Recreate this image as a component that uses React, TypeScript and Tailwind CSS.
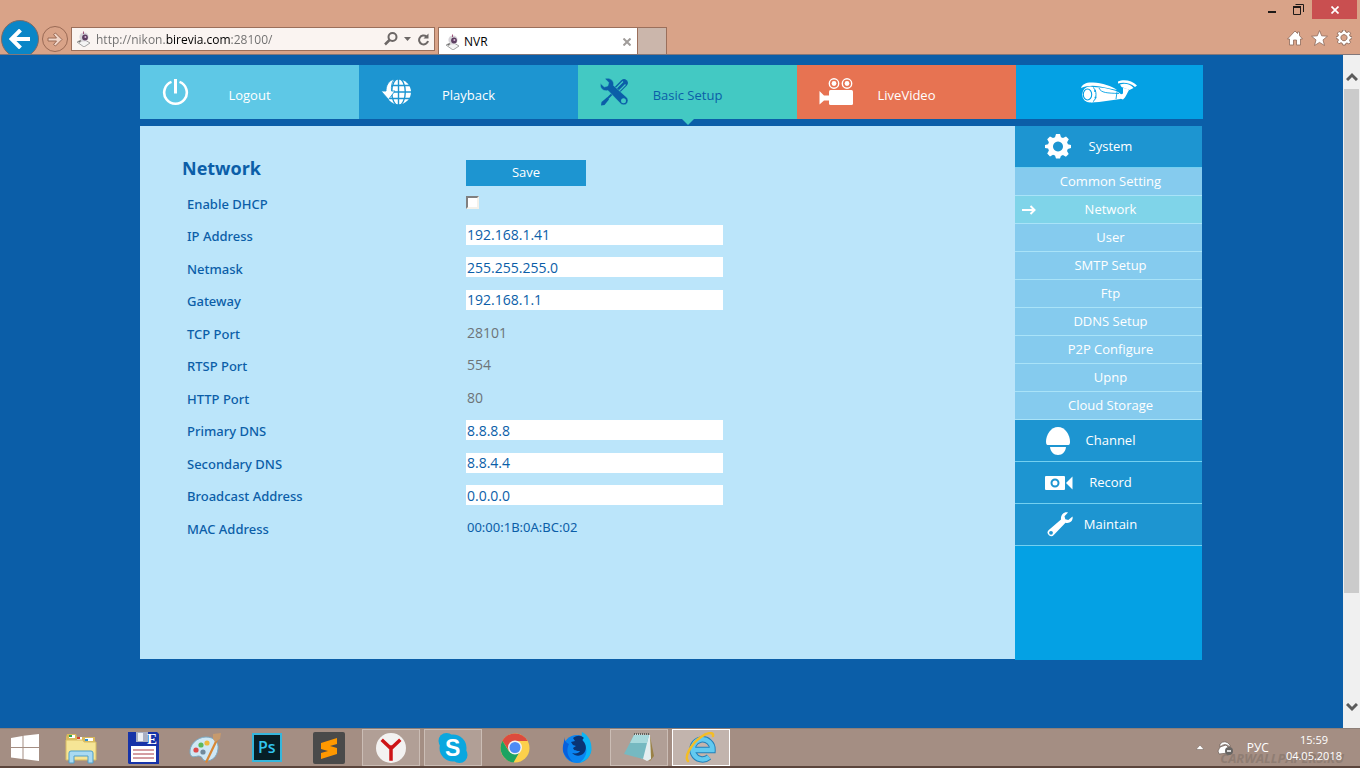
import type { ReactNode } from 'react'

interface NavTile {
	label: string
	color: string
	icon: ReactNode
	active?: boolean
}

interface Field {
	id: string
	label: string
	value: string
	kind: 'input' | 'readonly' | 'text'
}

interface TaskbarApp {
	name: string
	icon: ReactNode
	state?: 'open' | 'focused'
}

const fields: Field[] = [
	{ id: 'ip', label: 'IP Address', value: '192.168.1.41', kind: 'input' },
	{ id: 'netmask', label: 'Netmask', value: '255.255.255.0', kind: 'input' },
	{ id: 'gateway', label: 'Gateway', value: '192.168.1.1', kind: 'input' },
	{ id: 'tcp', label: 'TCP Port', value: '28101', kind: 'readonly' },
	{ id: 'rtsp', label: 'RTSP Port', value: '554', kind: 'readonly' },
	{ id: 'http', label: 'HTTP Port', value: '80', kind: 'readonly' },
	{ id: 'dns1', label: 'Primary DNS', value: '8.8.8.8', kind: 'input' },
	{ id: 'dns2', label: 'Secondary DNS', value: '8.8.4.4', kind: 'input' },
	{ id: 'broadcast', label: 'Broadcast Address', value: '0.0.0.0', kind: 'input' },
	{ id: 'mac', label: 'MAC Address', value: '00:00:1B:0A:BC:02', kind: 'text' },
]

const systemLinks = [
	'Common Setting',
	'Network',
	'User',
	'SMTP Setup',
	'Ftp',
	'DDNS Setup',
	'P2P Configure',
	'Upnp',
	'Cloud Storage',
]

function Favicon() {
	return (
		<svg width="15" height="16" viewBox="0 0 15 16" className="shrink-0">
			<path d="M1 11l8-2 5 3-6 4z" fill="#f4f4f4" stroke="#8d8d8d" strokeWidth="0.8" />
			<circle cx="8" cy="6" r="4.6" fill="#d6d3d8" />
			<circle cx="9" cy="6.5" r="2.9" fill="#5d3f62" />
			<circle cx="9.4" cy="6" r="1" fill="#d9b6d6" />
			<path d="M7.5 3V0.5" stroke="#a0557c" />
			<path d="M2 10l3-1-1 3z" fill="#6e6e6e" />
		</svg>
	)
}

function PowerIcon() {
	return (
		<svg width="27" height="28" viewBox="0 0 27 28" fill="none" stroke="#fff">
			<path d="M9.5 3.9a11.3 11.3 0 1 0 8 0" strokeWidth="2.6" />
			<path d="M13.5 1v14.5" strokeWidth="3" />
		</svg>
	)
}

function GlobeIcon() {
	return (
		<svg width="31" height="27" viewBox="0 0 31 27">
			<circle cx="17.5" cy="13" r="12.5" fill="#fff" />
			<g fill="none" stroke="#1d95d1" strokeWidth="1.4">
				<path d="M17.5 0v26M4 13h27M6 6.5h24M6 19.5h24" />
				<ellipse cx="17.5" cy="13" rx="6.8" ry="13.5" />
			</g>
			<path
				d="M13 0C7 2 5 7 5 12H0l7.5 8.5L14 12h-3.5C10 7 11 3 13 0z"
				fill="#fff"
				stroke="#1d95d1"
				strokeWidth="0.9"
			/>
		</svg>
	)
}

function ToolsIcon() {
	return (
		<svg width="28" height="28" viewBox="0 0 28 28">
			<path d="M17 12l7-7" stroke="#0b5ea8" strokeWidth="7.5" strokeLinecap="round" />
			<path d="M15.5 11l7.5-7.5M18 14l7.5-7.5" stroke="#43c9c3" strokeWidth="1.2" />
			<path d="M12 16l-6 6" stroke="#0b5ea8" strokeWidth="1.8" />
			<path d="M7 19.5l2 2-4.5 5.5-3.5 0.5 0.5-3.5z" fill="#0b5ea8" />
			<path
				d="M5 0.8l3.8 3.7-1 3.5-3.5 1L0.6 5.5C-0.5 9.5 3 13.8 8 12.5L20.5 25.5a4.3 4.3 0 0 0 6.3-6L13.5 7.5C14.5 3 10 -1 5 0.8z"
				fill="#0b5ea8"
				stroke="#43c9c3"
				strokeWidth="0.5"
			/>
			<circle cx="23.5" cy="22.8" r="2.5" fill="#43c9c3" />
		</svg>
	)
}

function MovieIcon() {
	return (
		<svg width="35" height="28" viewBox="0 0 35 28">
			<g fill="none" stroke="#fff" strokeWidth="1.4">
				<circle cx="15" cy="5.5" r="4.7" />
				<circle cx="28" cy="5.5" r="4.7" />
			</g>
			<g fill="#fff">
				<circle cx="15" cy="5.5" r="2.4" />
				<circle cx="28" cy="5.5" r="2.4" />
				<rect x="10" y="12" width="24" height="15" rx="1.5" />
				<path d="M0.5 13L5 17.5h5v5H5L0.5 26.5z" />
			</g>
		</svg>
	)
}

function BulletCameraLogo() {
	return (
		<svg width="57" height="24" viewBox="0 0 57 24" fill="#fff">
			<path d="M0 8C1 4 6 2 12 2.5c9 0.5 19 3.5 24 7.5L19 6.5C12 5 6 5.5 0 8z" />
			<path d="M12 7l7 0.5c6 0.5 12 2 18 4.5l4 3-1.5 4L18 22l-8 0.5z" />
			<ellipse cx="9" cy="14.5" rx="7.8" ry="8" />
			<ellipse cx="6.5" cy="14.5" rx="4.2" ry="5.5" fill="none" stroke="#04a1e4" strokeWidth="1.1" />
			<path d="M12 7.5c4 2 4 12 0 14" fill="none" stroke="#04a1e4" />
			<path d="M18 8c2 5 8 5 20 5.5M36 12l-1 7" fill="none" stroke="#04a1e4" strokeWidth="0.9" />
			<circle cx="14" cy="11" r="1" fill="#04a1e4" />
			<circle cx="14.5" cy="17.5" r="1" fill="#04a1e4" />
			<path d="M37 1.5c5-2.500 14-1.500 19 4l-2 1.500C49 2.500 42 2 37 3.500z" />
			<path d="M39 4.500c5-1.500 10-0.500 13.500 3.500l-4 2-8-3z" />
			<path d="M42 8c3 0 5 1 6 2-2 3-3 7-6 9.500l-3-1 1-4 2-1z" />
		</svg>
	)
}

function Cog({ size, fill, stroke }: { size: number; fill: string; stroke?: string }) {
	return (
		<svg width={size} height={size} viewBox="0 0 26 26">
			<path
				fillRule="evenodd"
				fill={fill}
				stroke={stroke}
				strokeWidth={stroke ? 1.5 : 0}
				strokeLinejoin="round"
				d="M11 0h4l1 3.300 2 0.800 3-1.700 2.800 2.800-1.700 3 0.800 2L26 11v3l-3.200 1-0.800 2 1.700 3-2.800 2.800-3-1.700-2 0.800L15 24.500h-4l-1-3-2-0.800-3 1.700-2.800-2.800 1.700-3-0.800-2L0 14v-3l3.100-0.800 0.800-2-1.700-3L5 2.400l3 1.700 2-0.800zM13 7.500a5 5 0 1 0 0.010 0z"
			/>
		</svg>
	)
}

function DomeIcon() {
	return (
		<svg width="26" height="28" viewBox="0 0 26 28" fill="#fff">
			<path d="M13 0c7 0 12 8 12 14.500 0 2-0.500 3.500-1.500 3.500h-21C1.500 18 1 16.500 1 14.500 1 8 6 0 13 0z" />
			<path d="M5 20h16c-0.500 4.500-3.500 8-8 8s-7.500-3.500-8-8z" />
		</svg>
	)
}

function RecordIcon() {
	return (
		<svg width="28" height="14" viewBox="0 0 28 14">
			<rect width="20" height="14" rx="1" fill="#fff" />
			<path d="M21 7l6.500-6.500v13z" fill="#fff" />
			<circle cx="10" cy="7" r="3.5" fill="none" stroke="#1d95d1" strokeWidth="2" />
		</svg>
	)
}

function WrenchIcon() {
	return (
		<svg width="28" height="25" viewBox="-2 0 28 25">
			<path
				d="M21 0.500l-3.500 3.800 0.800 3 3 0.800L25.500 4.500c1 4-2.500 7.500-7 6.300L7 22.800a3.500 3.500 0 0 1-5.500-4.600L14 7.500C13.500 3 17 -0.500 21 0.500z"
				fill="#fff"
			/>
			<circle cx="4" cy="20.8" r="1.9" fill="#1d95d1" />
		</svg>
	)
}

const navTiles: NavTile[] = [
	{ label: 'Logout', color: 'bg-[#5ec8e6] text-white', icon: <PowerIcon /> },
	{ label: 'Playback', color: 'bg-[#1d95d1] text-white', icon: <GlobeIcon /> },
	{ label: 'Basic Setup', color: 'bg-[#43c9c3] text-[#0b5ea8]', icon: <ToolsIcon />, active: true },
	{ label: 'LiveVideo', color: 'bg-[#e77352] text-white', icon: <MovieIcon /> },
]

const taskbarApps: TaskbarApp[] = [
	{
		name: 'File Explorer',
		icon: (
			<svg width="32" height="32" viewBox="0 0 32 32">
				<path d="M1 5l1-3h9l1 3h18v22H1z" fill="#d9b95c" />
				<path d="M4 3h6v3H4zM12 5h5v3h-5zM20 6h8v3h-8z" fill="#fff" />
				<path d="M4 3h3v2H4z" fill="#2fa84f" />
				<path d="M12 5h3v2h-3z" fill="#d8452f" />
				<path d="M20 7h3v2h-3z" fill="#2d8fd0" />
				<path d="M1 8h17l1 2h12v18H1z" fill="#f6e596" stroke="#d8bc63" />
				<path d="M4 31V21q0-2 2-2h20q2 0 2 2v10h-5v-7H9v7z" fill="#a9daf2" stroke="#4e9fc9" />
			</svg>
		),
	},
	{
		name: 'Disk',
		icon: (
			<svg width="32" height="32" viewBox="0 0 32 32">
				<path d="M1 0h29l2 2v30H2l-1-1z" fill="#1733a8" />
				<path d="M9 0h12v10H9z" fill="#aab0c4" />
				<path d="M11 1h5v8h-5z" fill="#eef0f6" />
				<path d="M4 14h25v16H4z" fill="#fff" />
				<path d="M6 18h21M6 22h21M6 26h21" stroke="#a83b44" />
				<text x="20" y="12" fontFamily="Liberation Serif, serif" fontWeight="700" fontSize="15" fill="#fff">
					E
				</text>
			</svg>
		),
	},
	{
		name: 'Paint',
		icon: (
			<svg width="32" height="32" viewBox="0 0 32 32">
				<path
					d="M1 21C0 13 8 5 17 5c8 0 13 5 12 12-1 8-6 12-12 12-4 0-3-5-7-5-3 0-8 3-9-3z"
					fill="#cfe7f4"
					stroke="#7ba9c4"
				/>
				<circle cx="7" cy="18" r="2.6" fill="#dd4a4a" />
				<circle cx="12" cy="13" r="2.6" fill="#5cb85a" />
				<circle cx="18" cy="11" r="2.6" fill="#edb93d" />
				<circle cx="14" cy="20" r="2.6" fill="#71899b" />
				<path d="M27 7l2 1-11 23-2-1z" fill="#d88735" />
				<path d="M24 2l8-1-1 6-5 3-2-3z" fill="#c79a6d" />
			</svg>
		),
	},
	{
		name: 'Photoshop',
		icon: (
			<svg width="30" height="30" viewBox="0 0 30 30">
				<rect x="1" y="1" width="28" height="27" fill="#071e26" stroke="#35b6dc" strokeWidth="2" />
				<text x="6" y="20" fontFamily="Open Sans, sans-serif" fontWeight="600" fontSize="16" fill="#31c5f0">
					Ps
				</text>
			</svg>
		),
	},
	{
		name: 'Sublime Text',
		icon: (
			<svg width="32" height="32" viewBox="0 0 32 32">
				<rect width="32" height="32" rx="2" fill="#4a4a4a" />
				<path d="M24 6v6l-7 2 7 2v6L8 27v-6l7-2-7-2v-6z" fill="#ff9800" />
			</svg>
		),
	},
	{
		name: 'Yandex Browser',
		state: 'open',
		icon: (
			<svg width="32" height="32" viewBox="0 0 32 32">
				<circle cx="16" cy="16" r="15" fill="#f3f2f1" />
				<path d="M8 9l8 7.500L24 9M16 15v12" fill="none" stroke="#cd1417" strokeWidth="3.5" strokeLinecap="square" />
			</svg>
		),
	},
	{
		name: 'Skype',
		state: 'open',
		icon: (
			<svg width="32" height="32" viewBox="0 0 32 32">
				<circle cx="16" cy="16" r="13.5" fill="#09a7df" />
				<circle cx="9.5" cy="9" r="8" fill="#09a7df" />
				<circle cx="22.5" cy="23" r="8" fill="#09a7df" />
				<text x="8" y="24" fontFamily="Liberation Sans, sans-serif" fontWeight="700" fontSize="23" fill="#fff">
					S
				</text>
			</svg>
		),
	},
	{
		name: 'Chrome',
		icon: (
			<svg width="32" height="32" viewBox="0 0 32 32">
				<circle cx="16" cy="16" r="14.5" fill="#fcd04b" />
				<path d="M3.400 8.800A14.500 14.500 0 0 1 28.600 9H16l-6 10z" fill="#dc4b3e" />
				<path d="M3.400 8.800A14.500 14.500 0 0 0 14.500 30.400L20.500 20 10 19.500z" fill="#1ca362" />
				<circle cx="16" cy="15.5" r="7" fill="#f2f2f2" />
				<circle cx="16" cy="15.5" r="5.5" fill="#4c8bf5" />
			</svg>
		),
	},
	{
		name: 'Firefox Developer Edition',
		icon: (
			<svg width="32" height="32" viewBox="0 0 32 32">
				<circle cx="16" cy="17" r="14" fill="#0a84f0" />
				<path d="M21 0c6 3 10 9 9.500 18-1 7-6 11-12 13 7-6 8-11 6-17-1-5-5-7-3.500-14z" fill="#0bb5f5" />
				<path
					d="M12 6c4-3 8-3 11 0-2 1-2 3 0 4 2 3 3 7 0 11-4 4-9 3-12 0 4 1 7 0 8-2-3 0-6 0-7-3l3-2-3-1-2-3 4-1z"
					fill="#0a3474"
				/>
				<path d="M3 5c1 5-2 8-1 14 2 6 6 9 10 11-6-6-7-12-4-18-3-1-4-3-5-7z" fill="#0760dd" />
			</svg>
		),
	},
	{
		name: 'Notepad',
		state: 'open',
		icon: (
			<svg width="32" height="32" viewBox="0 0 32 32">
				<path d="M27 4l4 20-4 5-3-3z" fill="#9a8146" />
				<path d="M12 2l15 1 1 24-4 2-6-3z" fill="#e4eef0" />
				<path d="M11 3h15l-6 24L1 22z" fill="#76b9c1" />
				<path d="M11 3h15l-2 8L7 11z" fill="#a8d9dc" />
				<path d="M11 2h16" stroke="#60605c" strokeWidth="2" strokeDasharray="1 1" />
			</svg>
		),
	},
	{
		name: 'Internet Explorer',
		state: 'focused',
		icon: (
			<svg width="32" height="32" viewBox="0 0 32 32" fill="none">
				<path d="M8 18H27.500A10 10 0 1 0 24 25" stroke="#2480b8" strokeWidth="6.5" />
				<path d="M8 18H27.500A10 10 0 1 0 24 25" stroke="#62caf0" strokeWidth="4.5" />
				<path d="M3 29C-1 25 6 12 16 5c7-5 13-5 12-1" stroke="#f4bd25" strokeWidth="2.5" strokeLinecap="round" />
			</svg>
		),
	},
]

function BrowserBar() {
	return (
		<header className="h-[55px] overflow-hidden border-b border-[#81777a] bg-[#d9a388]">
			<div className="flex h-5 items-start justify-end pr-[3px]">
				<button aria-label="Minimize" className="flex h-5 w-[26px] items-center justify-center">
					<span className="mt-1 h-[2px] w-2 bg-[#1f1a18]" />
				</button>
				<button aria-label="Restore" className="flex h-[18px] w-[27px] items-center justify-center">
					<svg width="11" height="11" viewBox="0 0 11 11" fill="none" stroke="#1f1a18">
						<path d="M2.500 0.500h8v7.500M0.500 3h7v7.500h-7z" />
						<path d="M0 3h8" strokeWidth="2" />
					</svg>
				</button>
				<button aria-label="Close" className="flex h-[19px] w-[45px] items-center justify-center bg-[#c94f50]">
					<svg width="8" height="8" viewBox="0 0 8 8" stroke="#fff" strokeWidth="1.7">
						<path d="M0.500 0.500l7 7M7.500 0.500l-7 7" />
					</svg>
				</button>
			</div>
			<div className="flex h-9 items-start pl-px">
				<button
					aria-label="Back"
					className="flex size-[38px] shrink-0 items-center justify-center rounded-full border border-[#7d6a66] bg-[#0a86c7]"
				>
					<svg width="22" height="20" viewBox="0 0 22 20" fill="none" stroke="#fff" strokeWidth="4">
						<path d="M2.500 10H21M11.500 1L2.500 10l9 9" />
					</svg>
				</button>
				<button
					aria-label="Forward"
					className="mt-1.5 ml-[3px] flex size-[26px] shrink-0 items-center justify-center rounded-full border border-[#9a6a55]"
				>
					<svg width="16" height="15" viewBox="0 0 16 15" fill="#f0d5c8" stroke="#9a6a55">
						<path d="M1 6h8.500L6.500 2.500 8.500 1 15 7.500 8.500 14l-2-1.500L9.500 9H1z" />
					</svg>
				</button>
				<div className="mt-[7px] ml-[3px] flex h-6 w-[364px] items-center border border-[#9b6f5b] bg-[#faf4f1] pr-1 pl-1">
					<Favicon />
					<input
						aria-label="Address"
						defaultValue="http://nikon.birevia.com:28100/"
						className="ml-[5px] min-w-0 flex-1 bg-[linear-gradient(90deg,#6d6d6d_0_69px,#000_69px_134px,#6d6d6d_134px)] bg-clip-text pt-px text-[12px] text-transparent outline-none"
					/>
					<button aria-label="Search">
						<svg width="14" height="14" viewBox="0 0 14 14" fill="none" stroke="#6c6766" strokeWidth="2">
							<circle cx="8.5" cy="5" r="4" />
							<path d="M5.500 8L1 12.500" strokeWidth="2.5" />
						</svg>
					</button>
					<button aria-label="Show address history" className="ml-1.5">
						<svg width="7" height="4" viewBox="0 0 7 4" fill="#6c6766">
							<path d="M0 0h7L3.500 4z" />
						</svg>
					</button>
					<button aria-label="Refresh" className="ml-[7px]">
						<svg width="12" height="13" viewBox="0 0 12 13" fill="none" stroke="#6c6766" strokeWidth="2">
							<path d="M8.500 3.500A4.500 4.500 0 1 0 10 8" />
							<path d="M10.500 0.500v5h-5z" fill="#6c6766" stroke="none" />
						</svg>
					</button>
				</div>
				<div className="mt-[7px] ml-[3px] flex h-7 w-[200px] items-center border border-b-0 border-[#9b6f5b] bg-white px-1.5">
					<Favicon />
					<span className="ml-1 flex-1 text-[12px] text-black">NVR</span>
					<button aria-label="Close tab">
						<svg width="8" height="8" viewBox="0 0 8 8" stroke="#a09c9a" strokeWidth="2">
							<path d="M0.500 0.500l7 7M7.500 0.500l-7 7" />
						</svg>
					</button>
				</div>
				<button
					aria-label="New tab"
					className="mt-[7px] h-7 w-[29px] border border-b-0 border-l-0 border-[#9b6f5b] bg-[#cbb6ab]"
				/>
				<div className="mt-2.5 mr-2 ml-auto flex items-center gap-2">
					<button aria-label="Home">
						<svg width="16" height="16" viewBox="0 0 16 16" fill="#fff" stroke="#8e6a5a" strokeWidth="0.8">
							<path d="M8 1l2.500 2.500V2h2v3.500L15.500 9H13.500v6H9.500v-5h-3v5h-4V9H0.500z" />
						</svg>
					</button>
					<button aria-label="Favorites">
						<svg width="17" height="16" viewBox="0 0 17 16" fill="#fff" stroke="#8e6a5a" strokeWidth="0.8">
							<path d="M8.500 0.500l2.200 5.300 5.800 0.400-4.500 3.700 1.500 5.600-5-3.100-5 3.100L5 9.900 0.500 6.200l5.800-0.400z" />
						</svg>
					</button>
					<button aria-label="Tools">
						<Cog size={16} fill="#fff" stroke="#8e6a5a" />
					</button>
				</div>
			</div>
		</header>
	)
}

function TopNav() {
	return (
		<nav className="flex h-[54px]">
			{navTiles.map((tile) => (
				<a
					key={tile.label}
					href="#"
					className={`relative grid flex-[219] grid-cols-[60px_1fr_60px] items-center text-center text-[13px] ${tile.color}`}
				>
					<span className="pl-[22px]">{tile.icon}</span>
					<span className="pt-2">{tile.label}</span>
					{tile.active && (
						<svg width="12" height="6" viewBox="0 0 12 6" className="absolute top-full left-1/2 -translate-x-1/2">
							<path d="M0 0h12L6 6z" fill="#43c9c3" />
						</svg>
					)}
				</a>
			))}
			<div className="flex flex-[187] items-center justify-center bg-[#04a1e4]">
				<BulletCameraLogo />
			</div>
		</nav>
	)
}

function NetworkForm() {
	return (
		<form className="min-h-[533px] flex-1 bg-[#bbe5fa] pt-[34px] pl-[42px] text-[13px] text-[#0b5ea8]">
			<div className="flex">
				<h1 className="w-[284px] text-[18px] leading-4 font-bold">Network</h1>
				<button type="button" className="h-[26px] w-[120px] bg-[#1d95d1] text-white">
					Save
				</button>
			</div>
			<div className="grid h-[358px] auto-rows-fr">
				<div className="flex items-center">
					<label htmlFor="dhcp" className="w-[284px] pt-1 pl-[5px] font-['Noto_Sans',sans-serif] font-medium">
						Enable DHCP
					</label>
					<input
						id="dhcp"
						type="checkbox"
						className="size-[13px] appearance-none border-2 border-t-[#808080] border-r-[#f4f1ea] border-b-[#f4f1ea] border-l-[#808080] bg-white"
					/>
				</div>
				{fields.map((field) => (
					<div key={field.id} className="flex items-center">
						<label htmlFor={field.id} className="w-[284px] pt-1 pl-[5px] font-['Noto_Sans',sans-serif] font-medium">
							{field.label}
						</label>
						{field.kind === 'input' && (
							<input
								id={field.id}
								type="text"
								defaultValue={field.value}
								className="h-5 w-[257px] bg-white px-px text-[14px] outline-none"
							/>
						)}
						{field.kind === 'readonly' && (
							<output id={field.id} className="px-px text-[14px] text-[#6d7478]">
								{field.value}
							</output>
						)}
						{field.kind === 'text' && (
							<output id={field.id} className="px-px font-['Noto_Sans',sans-serif] text-[13px]">
								{field.value}
							</output>
						)}
					</div>
				))}
			</div>
		</form>
	)
}

function SidebarSection({ label, icon }: { label: string; icon: ReactNode }) {
	return (
		<a
			href="#"
			className="grid h-[42px] grid-cols-[57px_1fr_53px] items-center border-b border-[#74d0f0] bg-[#1d95d1] text-center text-white"
		>
			<span className="pl-[30px]">{icon}</span>
			<span>{label}</span>
		</a>
	)
}

function Sidebar() {
	return (
		<aside className="min-h-[534px] w-[187px] shrink-0 bg-[#04a1e4] text-[13px]">
			<SidebarSection label="System" icon={<Cog size={26} fill="#fff" />} />
			<ul>
				{systemLinks.map((link) => (
					<li key={link}>
						<a
							href="#"
							className={`grid h-7 grid-cols-[30px_1fr_26px] items-center border-b border-[#a9e3f8] text-center text-white ${
								link === 'Network' ? 'bg-[#7fd4e9]' : 'bg-[#85cbee]'
							}`}
						>
							<span className="pl-[7px]">
								{link === 'Network' && (
									<svg width="14" height="10" viewBox="0 0 14 10" fill="none" stroke="#fff" strokeWidth="2">
										<path d="M0 5h12.500M8.500 1l4 4-4 4" />
									</svg>
								)}
							</span>
							<span>{link}</span>
						</a>
					</li>
				))}
			</ul>
			<SidebarSection label="Channel" icon={<DomeIcon />} />
			<SidebarSection label="Record" icon={<RecordIcon />} />
			<SidebarSection label="Maintain" icon={<WrenchIcon />} />
		</aside>
	)
}

function Scrollbar() {
	return (
		<div className="flex w-[17px] shrink-0 flex-col items-center bg-[#f0f0f0]">
			<button aria-label="Scroll up" className="flex h-[34px] items-end pb-2">
				<svg width="12" height="9" viewBox="0 0 12 9" fill="none" stroke="#5b5b5b" strokeWidth="3">
					<path d="M1 8l5-5 5 5" />
				</svg>
			</button>
			<div className="w-[15px] flex-[5] bg-[#cbcbcb]" />
			<div className="flex-1" />
			<button aria-label="Scroll down" className="flex h-[34px] items-center pb-2">
				<svg width="12" height="9" viewBox="0 0 12 9" fill="none" stroke="#5b5b5b" strokeWidth="3">
					<path d="M1 1l5 5 5-5" />
				</svg>
			</button>
		</div>
	)
}

function Taskbar() {
	return (
		<footer className="relative flex h-10 items-stretch border-t border-b-2 border-t-[#8d7f78] border-b-[#5b453c] bg-[#a48e83] text-[11px] text-white">
			<button aria-label="Start" className="flex w-[50px] items-center justify-center">
				<svg width="28" height="27" viewBox="0 0 28 27" fill="#fff">
					<path d="M0 4l11.500-2v11H0zM12.500 1.800L28 0v13H12.500zM0 14h11.500v11L0 23.500zM12.500 14H28v13l-15.500-2z" />
				</svg>
			</button>
			<div className="flex items-stretch gap-1 pl-0.5">
				{taskbarApps.map((app) => (
					<button
						key={app.name}
						aria-label={app.name}
						className={`flex w-[58px] items-center justify-center ${
							app.state === 'focused'
								? 'border border-white bg-[#c2b4ad]'
								: app.state === 'open'
									? 'border border-[#cbbdb5] bg-[#b19f96]'
									: ''
						}`}
					>
						{app.icon}
					</button>
				))}
			</div>
			{/* wallpaper caption showing through the translucent bar */}
			<span className="absolute right-4 bottom-0 text-[13px] leading-4 font-bold text-[#8f7d73] italic">
				CARWALLPAPERS.RU
			</span>
			<div className="relative ml-auto flex items-center pr-[18px]">
				<button aria-label="Show hidden icons">
					<svg width="8" height="5" viewBox="0 0 8 5" fill="#fff" stroke="#6b5d56" strokeWidth="0.5">
						<path d="M0 4.500L4 0l4 4.500z" />
					</svg>
				</button>
				<svg width="16" height="16" viewBox="0 0 16 16" className="ml-[13px]">
					<path d="M1 11L3 7l6-2 5 5-3 3-9 1z" fill="#fff" stroke="#6a5d57" strokeWidth="0.7" />
					<path d="M3 4q5-5 10 1v2Q8 2 3 7z" fill="#fff" stroke="#6a5d57" strokeWidth="0.7" />
					<circle cx="12" cy="11" r="4" fill="#686664" />
					<path d="M10 11h4" stroke="#fff" strokeWidth="1.5" />
				</svg>
				<span className="ml-3.5 text-[12px]">РУС</span>
				<div className="ml-[17px] text-center leading-4">
					<div>15:59</div>
					<div>04.05.2018</div>
				</div>
			</div>
		</footer>
	)
}

export default function App() {
	return (
		<div className="flex min-h-screen flex-col font-['Open_Sans','Noto_Sans',sans-serif]">
			<BrowserBar />
			<div className="flex flex-1">
				<main className="flex-1 bg-[#0b5ea8] pt-2.5">
					<div className="mx-auto max-w-[1063px]">
						<TopNav />
						<div className="mt-[7px] mr-px flex items-start">
							<NetworkForm />
							<Sidebar />
						</div>
					</div>
				</main>
				<Scrollbar />
			</div>
			<Taskbar />
		</div>
	)
}
